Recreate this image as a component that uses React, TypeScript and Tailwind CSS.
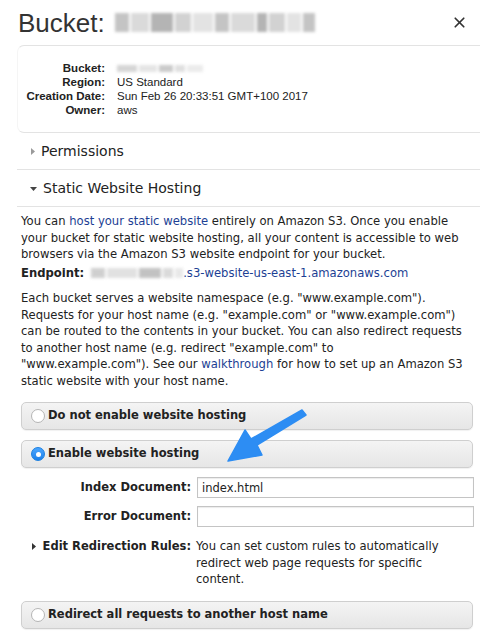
import { X } from 'lucide-react'

const verdana = { fontFamily: '"DejaVu Sans", Verdana, sans-serif' }

function Blurred({ widths, className }: { widths: number[]; className: string }) {
  const tones = ['bg-[#c4c4c4]', 'bg-[#dadada]', 'bg-[#b4b4b4]', 'bg-[#d2d2d2]', 'bg-[#e3e3e3]']
  return (
    <span className={`inline-flex items-center gap-[2px] blur-[1.5px] ${className}`}>
      {widths.map((w, i) => (
        <span key={i} className={`h-full ${tones[i % tones.length]}`} style={{ width: w }} />
      ))}
    </span>
  )
}

function Radio({ checked }: { checked?: boolean }) {
  if (checked) {
    return (
      <span className="flex h-[14px] w-[14px] items-center justify-center rounded-full border border-[#1b7fe0] bg-gradient-to-b from-[#4aa6ff] to-[#1a80ea]">
        <span className="h-[5px] w-[5px] rounded-full bg-white" />
      </span>
    )
  }
  return <span className="h-[14px] w-[14px] rounded-full border border-[#b5b5b5] bg-white" />
}

function Choice({ label, checked }: { label: string; checked?: boolean }) {
  return (
    <div className="ml-[21px] flex h-[28px] w-[452px] items-center gap-[3px] rounded-[5px] border border-[#cfcfcf] bg-gradient-to-b from-[#f4f4f4] to-[#e6e6e6] pl-[9px] shadow-[0_1px_1px_rgba(0,0,0,0.06)]">
      <Radio checked={checked} />
      <span className="text-[11.5px] font-bold text-[#222]">{label}</span>
    </div>
  )
}

export default function App() {
  return (
    <div className="relative h-[639px] w-[480px] overflow-hidden bg-white text-[#222]">
      <header className="flex h-[45px] items-center justify-between pl-[18px] pr-[12px]" style={{ fontFamily: '"Liberation Sans", Arial, sans-serif' }}>
        <div className="flex items-center gap-[10px]">
          <h1 className="text-[26px] leading-none text-[#333]">Bucket:</h1>
          <Blurred widths={[14, 18, 22, 16, 20, 14, 24, 10, 16, 14, 12]} className="h-[19px]" />
        </div>
        <X className="h-[17px] w-[17px] text-[#333]" strokeWidth={2.4} />
      </header>

      <section
        className="ml-[17px] rounded-l-[7px] border border-r-0 border-[#e3e3e3] border-l-[#f5f5f5] pb-[15px] pt-[15px]"
        style={{ fontFamily: '"Liberation Sans", Arial, sans-serif' }}
      >
        <dl className="grid grid-cols-[87px_1fr] gap-x-[12px] text-[11.5px] leading-[14px]">
          <dt className="text-right font-bold">Bucket:</dt>
          <dd className="flex items-center">
            <Blurred widths={[20, 18, 14, 10, 16]} className="h-[7px] opacity-70" />
          </dd>
          <dt className="text-right font-bold">Region:</dt>
          <dd>US Standard</dd>
          <dt className="text-right font-bold">Creation Date:</dt>
          <dd>Sun Feb 26 20:33:51 GMT+100 2017</dd>
          <dt className="text-right font-bold">Owner:</dt>
          <dd>aws</dd>
        </dl>
      </section>

      <div style={verdana}>
        <div className="ml-[17px] flex h-[37px] items-center gap-[6px] border-b border-[#e3e3e3] pl-[14px] text-[14px] text-[#222]">
          <svg width="4" height="7" viewBox="0 0 4 7" className="mt-[1px]">
            <path d="M0 0 L4 3.5 L0 7 Z" fill="#9a9a9a" />
          </svg>
          <span>Permissions</span>
        </div>
        <div className="ml-[17px] flex h-[37px] items-center gap-[6px] border-b border-[#e3e3e3] pl-[13px] text-[14px] text-[#222]">
          <svg width="7" height="4" viewBox="0 0 7 4" className="mt-[1px]">
            <path d="M0 0 L7 0 L3.5 4 Z" fill="#444" />
          </svg>
          <span>Static Website Hosting</span>
        </div>

        <div className="pl-[21px] pt-[6px] text-[11.6px] leading-[16.5px] text-[#222]">
          <p className="w-[455px]">
            You can <a className="text-[#1d3f94]">host your static website</a> entirely on Amazon S3. Once you enable
            your bucket for static website hosting, all your content is accessible to web browsers via the Amazon S3
            website endpoint for your bucket.
          </p>
          <p className="mt-[2px] flex items-center">
            <span className="font-bold">Endpoint:</span>
            <Blurred widths={[14, 30, 22, 10, 8]} className="ml-[7px] h-[10px] opacity-80" />
            <a className="text-[#1d3f94]">.s3-website-us-east-1.amazonaws.com</a>
          </p>
          <p className="mt-[9px] w-[456px]">
            Each bucket serves a website namespace (e.g. "www.example.com"). Requests for your host name (e.g.
            "example.com" or "www.example.com") can be routed to the contents in your bucket. You can also redirect
            requests to another host name (e.g. redirect "example.com" to
            <br />
            "www.example.com"). See our <a className="text-[#1d3f94]">walkthrough</a> for how to set up an Amazon S3
            static website with your host name.
          </p>
        </div>

        <div className="mt-[13px] flex flex-col gap-[10px]">
          <Choice label="Do not enable website hosting" />
          <Choice label="Enable website hosting" checked />
        </div>

        <div className="ml-[21px] mt-[9px] grid grid-cols-[170px_277px] items-center gap-x-[6px] gap-y-[8px] text-[11.5px]">
          <label className="text-right font-bold">Index Document:</label>
          <input
            readOnly
            value="index.html"
            className="h-[21px] border border-[#c4c4c4] px-[4px] text-[11.5px] text-[#222] shadow-[inset_0_1px_1px_rgba(0,0,0,0.08)] outline-none"
            style={verdana}
          />
          <label className="text-right font-bold">Error Document:</label>
          <input
            readOnly
            value=""
            className="h-[21px] border border-[#c4c4c4] px-[4px] text-[11.5px] shadow-[inset_0_1px_1px_rgba(0,0,0,0.08)] outline-none"
            style={verdana}
          />
        </div>

        <div className="ml-[21px] mt-[11px] grid grid-cols-[170px_280px] gap-x-[5px] text-[11.6px] leading-[16.5px]">
          <div className="flex items-center justify-end gap-[7px] self-start">
            <svg width="4" height="7" viewBox="0 0 4 7">
              <path d="M0 0 L4 3.5 L0 7 Z" fill="#333" />
            </svg>
            <span className="text-[11.5px] font-bold">Edit Redirection Rules:</span>
          </div>
          <p className="w-[262px]">
            You can set custom rules to automatically redirect web page requests for specific content.
          </p>
        </div>

        <div className="mt-[13px]">
          <Choice label="Redirect all requests to another host name" />
        </div>
      </div>

      <svg className="pointer-events-none absolute left-0 top-0" width="480" height="639" viewBox="0 0 480 639">
        <path
          d="M302 410 L306 415 L257 445 L262 455 L228 461 L245 430 L251 439 Z"
          fill="#2d8df3"
          stroke="#2d8df3"
          strokeWidth="1.5"
          strokeLinejoin="round"
        />
      </svg>
    </div>
  )
}
